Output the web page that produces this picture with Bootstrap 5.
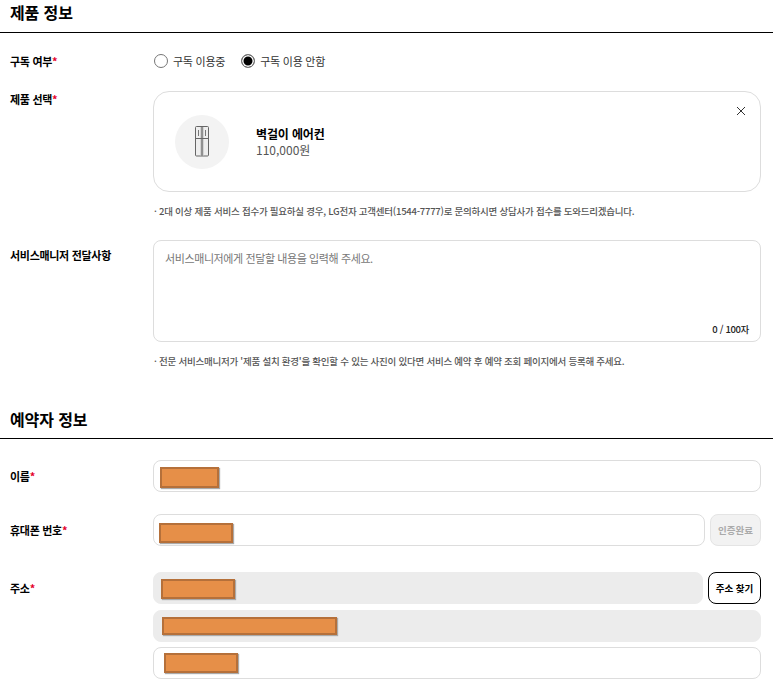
<!DOCTYPE html>
<html lang="ko"><head><meta charset="utf-8">
<link href="https://cdn.jsdelivr.net/npm/bootstrap@5.3.0/dist/css/bootstrap.min.css" rel="stylesheet">
<style>
body{font-family:"Noto Sans CJK KR","Noto Sans",sans-serif;color:#000;background:#fff;overflow:hidden;height:690px}
.sec-title{margin:0 0 0 10px;padding:0 0 8px;font-size:16px;line-height:24px;font-weight:700;color:#000;letter-spacing:-.1px}
.sec-head{border-bottom:1px solid #000;height:33px;margin-top:0}
.fld{display:flex;padding-left:10px;padding-right:12px}
.fld-label{flex:0 0 143px;font-size:11px;font-weight:700;line-height:16px;color:#000;letter-spacing:-.3px}
.fld-label i{color:#e4002b;font-style:normal}
.fld-main{flex:1 1 auto;min-width:0}
.radio-txt{font-size:11px;line-height:16px;color:#333;letter-spacing:-.25px}
.rd{width:14px;height:14px;border-radius:50%;border:1px solid #767676;background:#fff;display:inline-block;flex:none}
.rd.on{border:1px solid #767676;box-shadow:inset 0 0 0 1.5px #fff;background:#000}
.prod-box{height:101px;border:1px solid #ddd;border-radius:16px;padding:23px 21px;position:relative}
.prod-pic{width:54px;height:54px;border-radius:50%;background:#f3f3f3}
.prod-name{font-size:12px;font-weight:700;line-height:17px;color:#000;letter-spacing:-.15px}
.prod-price{font-size:12px;line-height:16px;color:#555}
.x-btn{position:absolute;top:14px;right:14px;width:10px;height:10px;display:block}
.note{font-size:9.5px;line-height:14px;font-weight:500;color:#555;margin:0;letter-spacing:-.24px;padding-left:1px}
.memo{height:102px;border:1px solid #ddd;border-radius:8px;padding:9px 11px;position:relative;font-size:11px;line-height:17px;color:#777;letter-spacing:-.4px}
.memo-count{position:absolute;right:11px;bottom:5px;font-size:9.5px;font-weight:500;line-height:14px;color:#222;letter-spacing:-.35px}
.box-in{height:32px;border:1px solid #ddd;border-radius:8px;background:#fff;position:relative}
.box-off{border-color:#ececec;background:#ececec}
.cover{position:absolute;background:#e68f48;border:2px solid #b5703a;box-shadow:1px 1px 1px #aaa}
.act{height:32px;border-radius:8px;font-size:9.5px;font-weight:700;line-height:14px;padding:0;flex:none}
.act-off{width:51px;border:1px solid #e4e4e4;background:#f2f2f2;color:#aaa}
.act-on{width:53px;border:1px solid #000;background:#fff;color:#000}
</style></head><body>
<div class="sec-head"><h2 class="sec-title">제품 정보</h2></div>

<div class="fld align-items-center" style="margin-top:20px">
  <div class="fld-label">구독 여부<i>*</i></div>
  <div class="fld-main d-flex align-items-center">
    <span class="d-flex align-items-center" style="gap:5px;margin-left:1px"><span class="rd"></span><span class="radio-txt">구독 이용중</span></span>
    <span class="d-flex align-items-center" style="gap:5px;margin-left:16px"><span class="rd on"></span><span class="radio-txt">구독 이용 안함</span></span>
  </div>
</div>

<div class="fld" style="margin-top:22px">
  <div class="fld-label">제품 선택<i>*</i></div>
  <div class="fld-main">
    <div class="prod-box d-flex align-items-center">
      <div class="prod-pic d-flex align-items-center justify-content-center">
        <svg width="14" height="31" viewBox="0 0 14 31" fill="none"><rect x=".5" y=".5" width="13" height="29.5" rx="1" fill="#eee" stroke="#666"/><rect x="5.5" y="1" width="3" height="29" fill="#bbb"/><path d="M7 .5V30M.5 12.5h13" stroke="#666"/><path d="M3.5 4v6M10.5 4v6" stroke="#777"/></svg>
      </div>
      <div style="margin-left:27px">
        <div class="prod-name">벽걸이 에어컨</div>
        <div class="prod-price">110,000원</div>
      </div>
      <svg class="x-btn" viewBox="0 0 10 10"><path d="M1 1l8 8M9 1l-8 8" stroke="#333" stroke-width="1"/></svg>
    </div>
    <p class="note" style="margin-top:12px">· 2대 이상 제품 서비스 접수가 필요하실 경우, LG전자 고객센터(1544-7777)로 문의하시면 상담사가 접수를 도와드리겠습니다.</p>
  </div>
</div>

<div class="fld" style="margin-top:22px">
  <div class="fld-label" style="padding-top:7px">서비스매니저 전달사항</div>
  <div class="fld-main">
    <div class="memo">서비스매니저에게 전달할 내용을 입력해 주세요.<span class="memo-count">0 / 100자</span></div>
    <p class="note" style="margin-top:12px">· 전문 서비스매니저가 '제품 설치 환경'을 확인할 수 있는 사진이 있다면 서비스 예약 후 예약 조회 페이지에서 등록해 주세요.</p>
  </div>
</div>

<div class="sec-head" style="margin-top:37px;height:34px"><h2 class="sec-title" style="padding-top:2px;padding-bottom:0">예약자 정보</h2></div>

<div class="fld align-items-center" style="margin-top:21px">
  <div class="fld-label">이름<i>*</i></div>
  <div class="fld-main"><div class="box-in"><span class="cover" style="left:6px;top:6px;width:59px;height:21px"></span></div></div>
</div>

<div class="fld align-items-center" style="margin-top:22px">
  <div class="fld-label">휴대폰 번호<i>*</i></div>
  <div class="fld-main d-flex" style="gap:5px">
    <div class="box-in flex-grow-1"><span class="cover" style="left:5px;top:8px;width:74px;height:20px"></span></div>
    <button type="button" class="act act-off">인증완료</button>
  </div>
</div>

<div class="fld" style="margin-top:26px">
  <div class="fld-label" style="padding-top:8px">주소<i>*</i></div>
  <div class="fld-main">
    <div class="d-flex" style="gap:5px">
      <div class="box-in box-off flex-grow-1"><span class="cover" style="left:7px;top:6px;width:74px;height:20px"></span></div>
      <button type="button" class="act act-on">주소 찾기</button>
    </div>
    <div class="box-in box-off" style="margin-top:6px"><span class="cover" style="left:8px;top:6px;width:175px;height:18px"></span></div>
    <div class="box-in" style="margin-top:5px"><span class="cover" style="left:10px;top:5px;width:74px;height:20px"></span></div>
  </div>
</div>
</body></html>
